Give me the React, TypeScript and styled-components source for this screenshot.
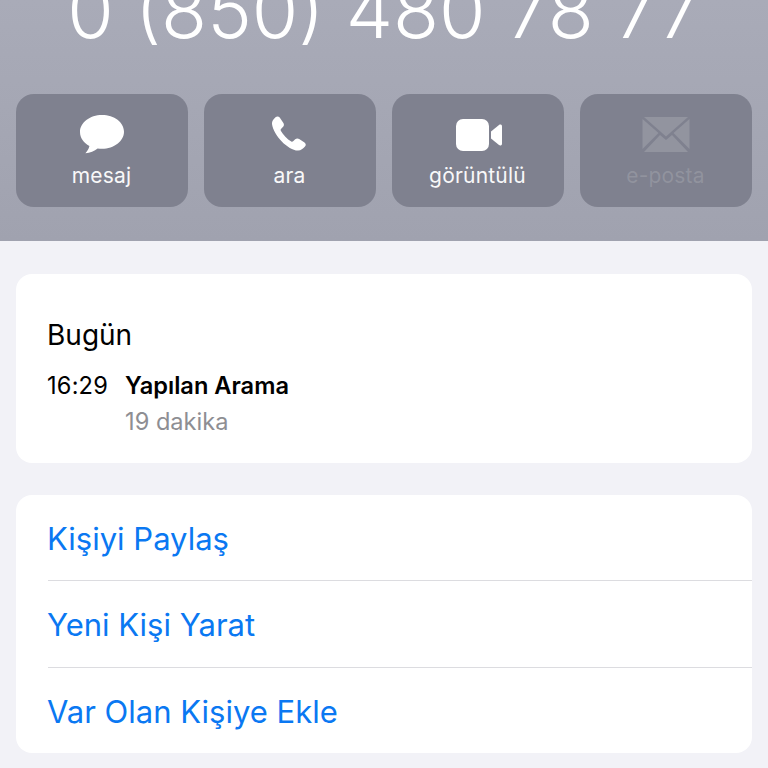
import React from 'react';
import styled, { createGlobalStyle } from 'styled-components';

const GlobalStyle = createGlobalStyle`
  html, body {
    margin: 0;
    padding: 0;
    background: #f2f2f7;
  }
  body {
    font-family: Inter, "Noto Sans", "Liberation Sans", sans-serif;
  }
`;

const Page = styled.div`
  width: 768px;
  height: 768px;
  overflow: hidden;
  background: #f2f2f7;
`;

const Header = styled.header`
  height: 241px;
  box-sizing: border-box;
  padding: 0 16px;
  overflow: hidden;
  background: linear-gradient(180deg, #a9abb8 0%, #a0a2af 100%);
`;

const PhoneNumber = styled.h1`
  margin: -34px 0 0;
  height: 128px;
  font-size: 75.3px;
  line-height: 90px;
  font-weight: 300;
  color: #ffffff;
  text-align: center;
  white-space: nowrap;
`;

const Actions = styled.div`
  display: grid;
  grid-template-columns: repeat(4, 172px);
  gap: 16px;
`;

const Action = styled.div<{ $disabled?: boolean }>`
  height: 113px;
  box-sizing: border-box;
  padding-top: 20px;
  border-radius: 18px;
  background: #7f818f;
  display: flex;
  flex-direction: column;
  align-items: center;
  color: ${(p) => (p.$disabled ? '#92949f' : '#ffffff')};
`;

const ActionIcon = styled.svg`
  width: 50px;
  height: 42px;
  display: block;
  fill: currentColor;
`;

const ActionLabel = styled.span`
  margin-top: 7px;
  margin-left: -1px;
  font-size: 21px;
  line-height: 26px;
  letter-spacing: 0.2px;
  opacity: 0.95;
`;

const Content = styled.main`
  padding: 33px 16px 0;
  display: flex;
  flex-direction: column;
  gap: 32px;
`;

const Card = styled.section`
  background: #ffffff;
  border-radius: 16px;
  overflow: hidden;
`;

const CallCard = styled(Card)`
  height: 189px;
  box-sizing: border-box;
  padding: 44px 31px 0;
`;

const LinksCard = styled(Card)`
  height: 258px;
`;

const DayTitle = styled.div`
  font-size: 28px;
  line-height: 34px;
  color: #000000;
`;

const CallRow = styled.div`
  margin-top: 17px;
  display: flex;
  gap: 17px;
`;

const CallTime = styled.div`
  font-size: 23.6px;
  line-height: 34px;
  letter-spacing: 0.2px;
  color: #000000;
`;

const CallInfo = styled.div`
  display: flex;
  flex-direction: column;
`;

const CallType = styled.div`
  font-size: 23.6px;
  line-height: 34px;
  font-weight: 600;
  color: #000000;
`;

const CallDuration = styled.div`
  margin-top: 1px;
  font-size: 23.6px;
  line-height: 36px;
  color: #8e8e93;
`;

const LinkRow = styled.div`
  height: 86.3px;
  box-sizing: border-box;
  margin-left: 32px;
  padding-top: 2px;
  display: flex;
  align-items: center;
  font-size: 31px;
  color: #0a78f2;
  border-bottom: 1px solid #dcdce0;

  &:last-child {
    border-bottom: none;
  }
`;

const LinkText = styled.span`
  margin-left: -1px;
`;

const App: React.FC = () => {
  return (
    <Page>
      <GlobalStyle />
      <Header>
        <PhoneNumber>0 (850) 480 78 77</PhoneNumber>
        <Actions>
          <Action>
            <ActionIcon viewBox="0 0 50 42">
              <path d="M25 1C12.800 1 3 8.600 3 18c0 5.800 3.700 10.900 9.400 14-.5 2.600-2 5.200-4 7.200 4.500-.3 9.200-2.300 12.200-4.800 1.400.2 2.900.4 4.400.4 12.200 0 22-7.600 22-17S37.200 1 25 1z" />
            </ActionIcon>
            <ActionLabel>mesaj</ActionLabel>
          </Action>
          <Action>
            <ActionIcon viewBox="0 0 50 42">
              <path d="M10.500 3.200c1.400-1.100 3.200-1 4.200.4l3.700 5.300c.8 1.200.7 2.800-.3 3.900l-2.100 2.100c-.5.5-.5 1.200-.2 1.800 2.300 4.200 6.300 8.400 10.500 10.800.6.3 1.300.2 1.800-.2l2.100-2c1-1 2.700-1.200 4-.3l5.300 3.400c1.500 1 1.700 2.800.5 4.200-1.900 2.300-4.500 4.200-7.200 4C23 35.800 8.600 21.900 7 9.900c-.3-2.600 1.500-5 3.500-6.700z" />
            </ActionIcon>
            <ActionLabel>ara</ActionLabel>
          </Action>
          <Action>
            <ActionIcon viewBox="0 0 50 42">
              <rect x="3" y="5" width="33" height="32" rx="7" />
              <path d="M38 17.500 46 11c1.300-1 3-.3 3 1.300v17.400c0 1.600-1.700 2.300-3 1.300l-8-6.500z" />
            </ActionIcon>
            <ActionLabel>görüntülü</ActionLabel>
          </Action>
          <Action $disabled>
            <ActionIcon viewBox="0 0 50 42">
              <path d="M3 3h44L25 22.500z" />
              <path d="M1.500 5v30l16-16zM48.500 5v30L32.500 19z" />
              <path d="M19 21l6 5 6-5 16 17H3z" />
            </ActionIcon>
            <ActionLabel>e-posta</ActionLabel>
          </Action>
        </Actions>
      </Header>
      <Content>
        <CallCard>
          <DayTitle>Bugün</DayTitle>
          <CallRow>
            <CallTime>16:29</CallTime>
            <CallInfo>
              <CallType>Yapılan Arama</CallType>
              <CallDuration>19 dakika</CallDuration>
            </CallInfo>
          </CallRow>
        </CallCard>
        <LinksCard>
          <LinkRow><LinkText>Kişiyi Paylaş</LinkText></LinkRow>
          <LinkRow><LinkText>Yeni Kişi Yarat</LinkText></LinkRow>
          <LinkRow><LinkText>Var Olan Kişiye Ekle</LinkText></LinkRow>
        </LinksCard>
      </Content>
    </Page>
  );
};

export default App;
